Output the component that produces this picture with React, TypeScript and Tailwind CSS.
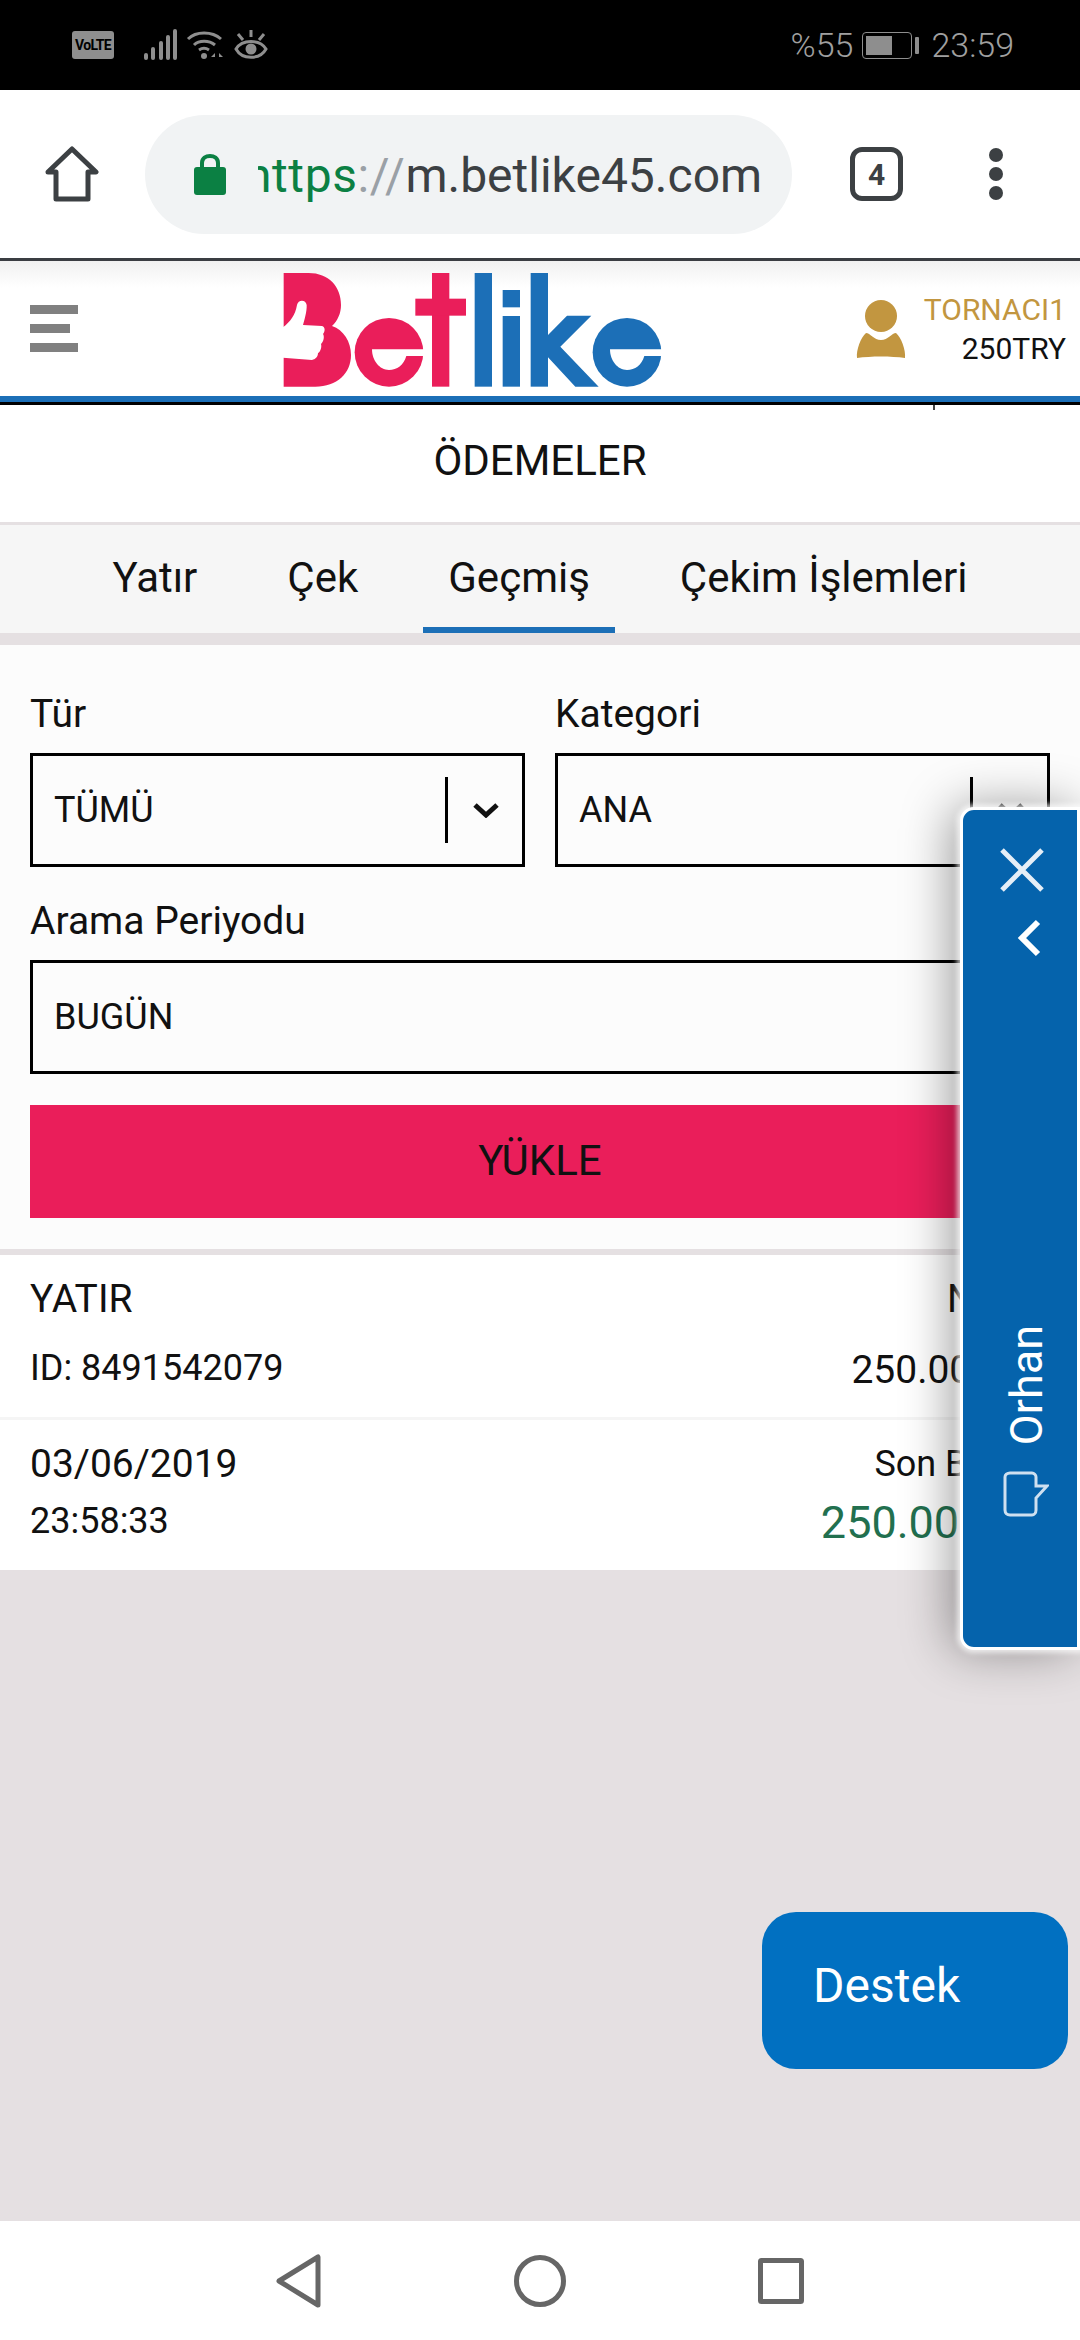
import { ReactNode } from "react";

const Logo = () => (
  <svg width="384" height="122" viewBox="0 0 1150 366">
    <g fill="#ea1e5a">
      <path d="M10 9H85C145 9 182 50 182 105C182 130 172 152 155 168C190 180 212 215 212 255C212 310 170 350 105 350H10Z" />
      <circle cx="326" cy="247" r="103" />
      <rect x="455" y="9" width="52" height="341" />
      <rect x="405" y="86" width="152" height="51" />
    </g>
    <path
      fill="#fff"
      d="M8 172C30 155 45 135 50 105C53 88 77 88 79 105C80 125 72 150 68 165L125 168C135 170 135 185 128 192C133 200 130 215 122 222C125 232 120 245 113 250C112 262 105 268 95 270L8 263Z"
    />
    <path fill="#fff" d="M275 238H432V258H378C370 285 350 300 326 300C298 300 275 272 275 238Z" />
    <g fill="#1c6fb7">
      <rect x="583" y="9" width="52" height="341" />
      <rect x="667" y="60" width="52" height="52" />
      <rect x="667" y="138" width="52" height="212" />
      <rect x="751" y="9" width="52" height="341" />
      <path d="M803 195L860 137H933L840 230L955 350H885L803 262Z" />
      <circle cx="1040" cy="247" r="103" />
    </g>
    <path fill="#fff" d="M989 238H1146V258H1092C1084 285 1064 300 1040 300C1012 300 989 272 989 238Z" />
  </svg>
);

const SelectBox = ({ value }: { value: string }) => (
  <div className="flex h-[114px] items-center border-[3px] border-black pl-[21px] text-[36px] text-[#111]">
    <span className="flex-1">{value}</span>
    <span className="h-[66px] w-[3px] bg-black" />
    <svg className="mr-[23px] ml-[25px]" width="26" height="16" viewBox="0 0 26 16" fill="none">
      <path d="M2 3L13 13L24 3" stroke="#111" strokeWidth="5" />
    </svg>
  </div>
);

const Label = ({ children }: { children: ReactNode }) => (
  <div className="text-[39px] leading-[46px] text-[#111]">{children}</div>
);

const StatusIcons = () => (
  <div className="flex items-center pl-[72px]">
    <div className="flex h-[28px] w-[42px] items-center justify-center rounded-[3px] bg-[#8e8e8e] text-[14px] font-bold tracking-tighter text-black">
      VoLTE
    </div>
    <svg className="ml-[29px]" width="34" height="32" viewBox="0 0 34 32" fill="#8e8e8e">
      <rect x="1" y="24" width="4" height="7" rx="2" />
      <rect x="8" y="18" width="4" height="13" rx="2" />
      <rect x="16" y="12" width="4" height="19" rx="2" />
      <rect x="23" y="6" width="4" height="25" rx="2" />
      <rect x="30" y="0" width="4" height="31" rx="2" />
    </svg>
    <svg className="ml-[9px]" width="38" height="32" viewBox="0 0 38 32" fill="none" stroke="#8e8e8e" strokeWidth="3">
      <path d="M2 10C10 2 26 2 35 10" />
      <path d="M8 16C13 11 23 11 29 16" />
      <path d="M13 21C16 19 20 19 23 21" />
      <circle cx="18" cy="27" r="3" fill="#8e8e8e" stroke="none" />
      <path d="M29 24L25 28H29ZM33 24L37 28H33Z" fill="#8e8e8e" stroke="none" />
    </svg>
    <svg className="ml-[10px]" width="34" height="32" viewBox="0 0 34 32" fill="none" stroke="#8e8e8e" strokeWidth="3">
      <path d="M2 20C8 10 26 10 32 20C26 31 8 31 2 20Z" />
      <circle cx="17" cy="20" r="5.5" fill="#8e8e8e" stroke="none" />
      <path d="M17 1V8M4 5L9 11M30 5L25 11" />
    </svg>
  </div>
);

const StatusRight = () => (
  <div className="flex items-center pr-[66px] text-[34px] font-light text-[#a0a0a0]">
    <span>%55</span>
    <div className="ml-[9px] h-[27px] w-[50px] rounded-[4px] border border-[#8e8e8e] p-[3px]">
      <div className="h-full w-[26px] bg-[#8e8e8e]" />
    </div>
    <div className="ml-[3px] h-[17px] w-[4px] rounded-[1px] bg-[#8e8e8e]" />
    <span className="ml-[12px]">23:59</span>
  </div>
);

const BrowserBar = () => (
  <div className="flex h-[168px] items-center bg-white pl-[45px]">
    <svg width="54" height="56" viewBox="0 0 54 56" fill="none">
      <path d="M3 26L27 3L51 26H43V53H11V26Z" stroke="#3c4043" strokeWidth="5" strokeLinejoin="round" />
    </svg>
    <div className="ml-[46px] flex h-[119px] w-[647px] items-center rounded-full bg-[#f1f3f4] pl-[49px]">
      <svg width="32" height="42" viewBox="0 0 32 42" fill="none">
        <path d="M8 16V10C8 0.5 24 0.5 24 10V16" stroke="#0b8043" strokeWidth="4" />
        <rect y="14" width="32" height="28" rx="3" fill="#0b8043" />
      </svg>
      <div className="ml-[32px] w-[510px] overflow-hidden pt-[3px] text-[48px] leading-[64px] whitespace-nowrap">
        <span className="-ml-[13px] inline-block">
          <span className="tracking-[0.6px] text-[#0b8043]">https</span>
          <span className="tracking-[0.6px] text-[#9aa0a6]">://</span>
          <span className="text-[#3c4043]">m.betlike45.com</span>
        </span>
      </div>
    </div>
    <div className="ml-[58px] flex h-[54px] w-[53px] items-center justify-center rounded-[12px] border-[5px] border-[#3c4043] text-[30px] font-bold text-[#3c4043]">
      4
    </div>
    <div className="ml-[86px] flex flex-col gap-[5px]">
      <div className="h-[14px] w-[14px] rounded-full bg-[#3c4043]" />
      <div className="h-[14px] w-[14px] rounded-full bg-[#3c4043]" />
      <div className="h-[14px] w-[14px] rounded-full bg-[#3c4043]" />
    </div>
  </div>
);

const SiteHeader = () => (
  <div className="relative flex h-[135px] items-center bg-gradient-to-b from-[#f1f1f1] to-white to-[20%]">
    <div className="ml-[30px] flex w-[48px] flex-col gap-[10px]">
      <div className="h-[9px] w-[48px] bg-[#808080]" />
      <div className="h-[9px] w-[40px] bg-[#808080]" />
      <div className="h-[9px] w-[48px] bg-[#808080]" />
    </div>
    <div className="absolute top-[9px] left-[280px]">
      <Logo />
    </div>
    <svg className="absolute top-[39px] left-[856px]" width="50" height="60" viewBox="0 0 50 60" fill="#c29640">
      <circle cx="25" cy="16" r="16" />
      <path d="M10 33C14 33 18 40 25 40C32 40 36 33 40 33C45 37 50 50 49 58C35 56 15 56 1 58C0 50 5 37 10 33Z" />
    </svg>
    <div className="absolute top-[29px] right-[14px] text-right text-[30px] leading-[39px]">
      <div className="text-[#c29640]">TORNACI1</div>
      <div className="text-[#111]">250TRY</div>
    </div>
  </div>
);

const Tabs = () => (
  <div className="flex h-[108px] justify-center gap-[40px] bg-[#f6f6f6] text-[42px] text-[#111]">
    <div className="flex items-center px-[25px] pb-[3px]">Yatır</div>
    <div className="flex items-center px-[25px] pb-[3px]">Çek</div>
    <div className="flex items-center border-b-[6px] border-[#1c6fb7] px-[25px] pt-[3px]">Geçmiş</div>
    <div className="flex items-center px-[25px] pb-[3px]">Çekim İşlemleri</div>
  </div>
);

const SidePanel = () => (
  <div className="absolute top-[807px] right-0 flex h-[843px] w-[120px] flex-col rounded-l-[14px] border-[3px] border-white bg-[#0563ac] pt-[37px] shadow-[0_0_5px_3px_rgba(255,255,255,0.7),-8px_0_50px_rgba(0,0,0,0.4)]">
    <svg className="ml-[36px]" width="46" height="46" viewBox="0 0 46 46" fill="none">
      <path d="M3 3L43 43M43 3L3 43" stroke="#e6eff7" strokeWidth="5" />
    </svg>
    <svg className="mt-[26px] ml-[54px]" width="24" height="38" viewBox="0 0 24 38" fill="none">
      <path d="M21 3L5 19L21 35" stroke="#fff" strokeWidth="6" />
    </svg>
    <div className="mt-[368px] ml-[41px] rotate-180 text-[45px] leading-[45px] text-white [writing-mode:vertical-rl]">
      Orhan
    </div>
    <svg className="mt-[26px] ml-[40px]" width="46" height="46" viewBox="0 0 46 46" fill="none">
      <path
        d="M7 2H29C31 2 33 4 33 6V15H44L33 27V39C33 42 31 44 29 44H7C4 44 2 42 2 39V6C2 4 4 2 7 2Z"
        stroke="#cfe0f0"
        strokeWidth="3"
      />
    </svg>
  </div>
);

const NavBar = () => (
  <div className="flex h-[119px] items-center justify-center bg-white">
    <svg width="46" height="54" viewBox="0 0 46 54" fill="none">
      <path d="M42 3V51L3 27Z" stroke="#666" strokeWidth="5" strokeLinejoin="round" />
    </svg>
    <svg className="ml-[192px]" width="52" height="52" viewBox="0 0 52 52" fill="none">
      <circle cx="26" cy="26" r="23.5" stroke="#666" strokeWidth="5" />
    </svg>
    <svg className="ml-[192px]" width="46" height="46" viewBox="0 0 46 46" fill="none">
      <rect x="2.5" y="2.5" width="41" height="41" rx="1" stroke="#666" strokeWidth="5" />
    </svg>
  </div>
);

export default function App() {
  return (
    <div className="relative flex h-[2340px] w-[1080px] flex-col overflow-hidden bg-[#e5e0e2] font-['Roboto',sans-serif]">
      <div className="flex h-[90px] items-center justify-between bg-black">
        <StatusIcons />
        <StatusRight />
      </div>
      <BrowserBar />
      <div className="h-[3px] bg-[#3a3d42]" />
      <SiteHeader />
      <div className="h-[6px] bg-[#1c6fb7]" />
      <div className="h-[3px] bg-black" />

      <div className="relative flex h-[117px] items-center justify-center bg-white pb-[6px] text-[42px] text-[#111]">
        ÖDEMELER
        <div className="absolute top-0 left-[933px] h-[5px] w-[2px] bg-[#444]" />
      </div>
      <div className="h-[3px] bg-[#e5e0e2]" />
      <Tabs />
      <div className="h-[12px]" />

      <div className="bg-[#fcfcfc] px-[30px] pt-[46px] pb-[31px]">
        <div className="grid grid-cols-2 gap-x-[30px]">
          <div>
            <Label>Tür</Label>
            <div className="mt-[16px]">
              <SelectBox value="TÜMÜ" />
            </div>
          </div>
          <div>
            <Label>Kategori</Label>
            <div className="mt-[16px]">
              <SelectBox value="ANA" />
            </div>
          </div>
        </div>
        <div className="mt-[31px]">
          <Label>Arama Periyodu</Label>
        </div>
        <div className="mt-[16px]">
          <SelectBox value="BUGÜN" />
        </div>
        <div className="mt-[31px] flex h-[113px] items-center justify-center bg-[#ea1e5a] pb-[2px] text-[42px] text-[#111]">
          YÜKLE
        </div>
      </div>

      <div className="mt-[6px] bg-white text-[#111]">
        <div className="flex h-[162px] justify-between px-[30px] pt-[21px]">
          <div>
            <div className="text-[39px] leading-[46px]">YATIR</div>
            <div className="mt-[24px] text-[36px] leading-[44px]">ID: 8491542079</div>
          </div>
          <div className="text-right">
            <div className="mr-[12px] text-[39px] leading-[46px]">Nakit</div>
            <div className="mt-[26px] text-[39px] leading-[44px]">250.00 TRY</div>
          </div>
        </div>
        <div className="h-[3px] bg-[#f5f5f5]" />
        <div className="flex h-[150px] justify-between px-[30px] pt-[21px]">
          <div>
            <div className="text-[39px] leading-[46px]">03/06/2019</div>
            <div className="mt-[12px] text-[36px] leading-[44px]">23:58:33</div>
          </div>
          <div className="text-right">
            <div className="text-[36px] leading-[46px]">Son Bakiye</div>
            <div className="mt-[10px] text-[45px] leading-[52px] text-[#22704f]">250.00 TRY</div>
          </div>
        </div>
      </div>

      <div className="flex-1" />
      <NavBar />

      <SidePanel />
      <div className="absolute top-[1912px] right-[12px] flex h-[157px] w-[306px] items-center rounded-[34px] bg-[#0170c1] pb-[10px] pl-[51px] text-[48px] text-white">
        Destek
      </div>
    </div>
  );
}
